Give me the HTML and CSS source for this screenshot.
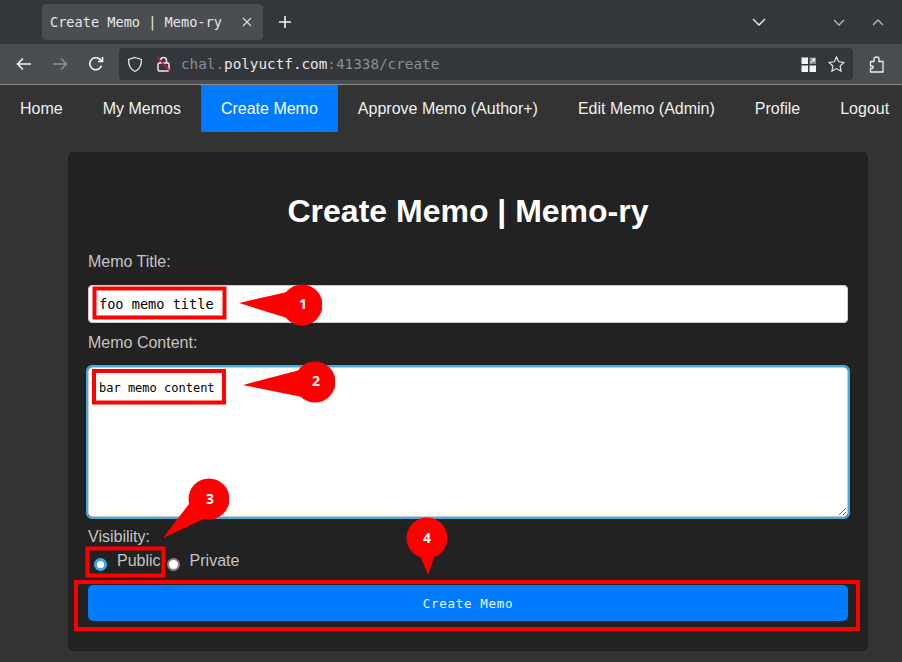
FILE: index.html
```html
<!DOCTYPE html>
<html lang="en">
<head>
<meta charset="utf-8">
<title>Create Memo | Memo-ry</title>
<link rel="stylesheet" href="styles.css">
</head>
<body>
<div class="page">
  <div class="tabbar">
    <div class="tab">
      <span class="tab-title">Create Memo | Memo-ry</span>
      <svg class="tab-close" width="10" height="10" viewBox="0 0 10 10"><path d="M1 1l8 8M9 1l-8 8"/></svg>
    </div>
    <svg class="new-tab" width="14" height="14" viewBox="0 0 14 14"><path d="M7 1v12M1 7h12"/></svg>
    <div class="spacer"></div>
    <svg class="chev tabs-list" width="14" height="8" viewBox="0 0 14 8"><path d="M1 1l6 6 6-6"/></svg>
    <svg class="chev win-min" width="12" height="7" viewBox="0 0 12 7"><path d="M1 1l5 5 5-5"/></svg>
    <svg class="chev win-max" width="12" height="7" viewBox="0 0 12 7"><path d="M1 6l5-5 5 5"/></svg>
  </div>
  <div class="toolbar">
    <svg class="tool back" width="16" height="14" viewBox="0 0 16 14"><path d="M15 7H2M7 1.500L1.500 7 7 12.500"/></svg>
    <svg class="tool fwd" width="16" height="14" viewBox="0 0 16 14"><path d="M1 7h13M9 1.500L14.500 7 9 12.500"/></svg>
    <svg class="tool reload" width="16" height="16" viewBox="0 0 16 16"><path d="M13.500 9.500A6 6 0 1 1 11.500 3L14 5M14.500 1v4.500H10"/></svg>
    <div class="urlbar">
      <svg class="shield" width="16" height="17" viewBox="0 0 16 17"><path d="M8 1.500L14.500 3.500C14.500 9 12.500 13.500 8 15.500 3.500 13.500 1.500 9 1.500 3.500Z"/></svg>
      <svg class="lock" width="15" height="16" viewBox="0 0 15 16"><rect x="2" y="7" width="11" height="8" rx="1.500" class="lock-body"/><path d="M4.500 7V4.500a3 3 0 0 1 6 0V7" class="lock-body"/><path d="M1 1l13 14" class="lock-slash"/></svg>
      <span class="url"><span class="dim">chal.</span>polyuctf.com<span class="dim">:41338/create</span></span>
      <div class="spacer"></div>
      <svg class="qr" width="15" height="15" viewBox="0 0 15 15"><rect x="0.500" y="0.500" width="6.500" height="6.500" class="qr-cell"/><rect x="0.500" y="8.500" width="6.500" height="6.500" class="qr-cell"/><rect x="8.500" y="8.500" width="6.500" height="6.500" class="qr-cell"/><rect x="8.500" y="0.500" width="6.500" height="6.500" class="qr-gray"/><path d="M9.500 6l4-4M10.500 1.800h3v3" class="qr-arrow"/></svg>
      <svg class="star" width="17" height="16" viewBox="0 0 17 16"><path d="M8.500 1l2.200 4.800 5.300.6-3.900 3.600 1 5.200-4.600-2.600-4.600 2.600 1-5.200L1 6.400l5.300-.6Z"/></svg>
    </div>
    <svg class="puzzle" width="15" height="17" viewBox="0 0 15 17"><path d="M1.500 16V12.500H3.500Q5 11.200 3.500 10H1.500V5.500H5V3Q5 1 7.500 1 10 1 10 3V5.500H14V16Z"/></svg>
  </div>
  <nav class="nav">
    <a class="nav-item">Home</a>
    <a class="nav-item">My Memos</a>
    <a class="nav-item active">Create Memo</a>
    <a class="nav-item">Approve Memo (Author+)</a>
    <a class="nav-item">Edit Memo (Admin)</a>
    <a class="nav-item">Profile</a>
    <a class="nav-item">Logout</a>
  </nav>
  <main class="main">
    <form class="card">
      <h1 class="title">Create Memo | Memo-ry</h1>
      <label class="label">Memo Title:</label>
      <input class="input" type="text" value="foo memo title">
      <label class="label label-content">Memo Content:</label>
      <textarea class="textarea">bar memo content</textarea>
      <label class="label label-vis">Visibility:</label>
      <div class="radios">
        <input class="radio" type="radio" name="v" checked><span class="radio-text">Public</span>
        <input class="radio" type="radio" name="v"><span class="radio-text">Private</span>
      </div>
      <button class="submit" type="button">Create Memo</button>
    </form>
  </main>
  <svg class="annotations" width="902" height="662" viewBox="0 0 902 662">
    <defs>
      <clipPath id="clip1"><rect x="230" y="280" width="92" height="50"/></clipPath>
      <clipPath id="clip2"><rect x="235" y="355" width="100" height="48"/></clipPath>
      <clipPath id="clip3"><rect x="160" y="470" width="69" height="75"/></clipPath>
    </defs>
    <rect x="94.500" y="288.500" width="130" height="29" class="box"/>
    <rect x="94" y="371" width="130" height="31.500" class="box"/>
    <rect x="87.500" y="548.500" width="76" height="27" class="box"/>
    <rect x="76" y="582" width="782" height="47" class="box"/>
    <g clip-path="url(#clip1)">
      <path d="M239 303L287 292 287 318Z" class="pin"/>
      <circle cx="302" cy="305" r="20.500" class="pin"/>
    </g>
    <g clip-path="url(#clip2)">
      <path d="M243 385L300 370 302 397Z" class="pin"/>
      <circle cx="315" cy="382" r="20.500" class="pin"/>
    </g>
    <g clip-path="url(#clip3)">
      <path d="M163 538L192 500 206 518Z" class="pin"/>
      <circle cx="209" cy="499" r="20.500" class="pin"/>
    </g>
    <path d="M420 555L428 575 435 555Z" class="pin"/>
    <circle cx="427" cy="538" r="20.500" class="pin"/>
    <text x="303" y="309" class="pin-num">1</text>
    <text x="316" y="386" class="pin-num">2</text>
    <text x="210" y="504" class="pin-num">3</text>
    <text x="427" y="543" class="pin-num">4</text>
  </svg>
</div>
</body>
</html>
```
FILE: styles.css
```css
* { box-sizing: border-box; }
html, body { margin: 0; padding: 0; }
body { background: #333; font-family: "Liberation Sans", Arial, sans-serif; font-size: 16px; color: #fff; }
.page { position: relative; width: 902px; height: 662px; overflow: hidden; background: #333; }
.spacer { flex: 1; }

.tabbar { height: 44px; background: #33373b; display: flex; align-items: center; padding-left: 42px; }
.tab { width: 221px; height: 36px; background: #4a4d52; border-radius: 4px; display: flex; align-items: center; padding: 0 11px 0 8px; justify-content: space-between; }
.tab-title { font-family: "DejaVu Sans Mono", monospace; font-size: 13.6px; color: #e8e8e8; white-space: nowrap; }
.tab-close path { fill: none; stroke: #e0e0e0; stroke-width: 1.1; }
.new-tab { margin-left: 15px; }
.new-tab path { fill: none; stroke: #f2f2f2; stroke-width: 1.600; }
.chev path { fill: none; stroke-width: 1.300; }
.tabs-list { margin-right: 67px; }
.tabs-list path { stroke: #f0f0f0; }
.win-min { margin-right: 27px; }
.win-max { margin-right: 18px; }
.win-min path, .win-max path { stroke: #b9bbbd; }

.toolbar { height: 41px; background: #4a4e52; border-bottom: 1px solid #8a8c8e; display: flex; align-items: center; padding: 0 0 0 16px; }
.tool path { fill: none; stroke-width: 1.600; }
.back path, .reload path { stroke: #f4f4f4; }
.fwd { margin-left: 20px; }
.fwd path { stroke: #8d9093; }
.reload { margin-left: 20px; }
.urlbar { margin-left: 15px; width: 734px; height: 32px; background: #33363a; border-radius: 4px; display: flex; align-items: center; padding: 0 8px; }
.shield path { fill: none; stroke: #e6e6e6; stroke-width: 1.300; }
.lock { margin-left: 13px; }
.lock-body { fill: none; stroke: #ededed; stroke-width: 1.500; }
.lock-slash { fill: none; stroke: #e0103a; stroke-width: 1.400; }
.url { margin-left: 10px; font-family: "DejaVu Sans Mono", monospace; font-size: 14.3px; color: #e8e8e8; white-space: nowrap; }
.dim { color: #8b8e91; }
.qr { margin-right: 12px; }
.qr-cell { fill: #f4f4f4; }
.qr-gray { fill: #85888b; }
.qr-arrow { fill: none; stroke: #e8e8e8; stroke-width: 1.200; }
.star { margin-right: 0; }
.star path { fill: none; stroke: #e8e8e8; stroke-width: 1.200; }
.puzzle { margin-left: 16px; }
.puzzle path { fill: none; stroke: #ededed; stroke-width: 1.300; }

.nav { height: 47px; background: #333; display: flex; }
.nav-item { flex: none; padding: 14px 20px; line-height: 19px; color: #f0f0f0; white-space: nowrap; }
.nav-item.active { background: #007bff; color: #fff; }

.main { padding: 20px 34px 0 68px; }
.card { width: 800px; height: 499px; background: #222; border-radius: 5px; padding: 20px; display: flex; flex-direction: column; }
.title { margin: 21px 0 23px; font-size: 32px; line-height: 37px; text-align: center; color: #fff; font-weight: 700; }
.label { display: block; color: #c4c4c4; line-height: 18px; }
.input { display: block; width: 100%; height: 38px; margin-top: 14px; padding: 0 10px; background: #fff; border: 1px solid #ccc; border-radius: 4px; font-family: "DejaVu Sans Mono", monospace; font-size: 13.6px; color: #000; outline: none; }
.label-content { margin-top: 11px; }
.textarea { display: block; width: 100%; height: 150px; margin-top: 15px; padding: 10px; background: #fff; border: 1px solid #ccc; border-radius: 4px; font-family: "DejaVu Sans Mono", monospace; font-size: 12px; line-height: 20px; color: #000; outline: 2px solid #45a8e0; outline-offset: 0; }
.label-vis { margin-top: 11px; }
.radios { display: flex; align-items: flex-start; margin-top: 6px; height: 18px; }
.radio { appearance: none; width: 13px; height: 13px; margin: 6px 5px 0 6px; border-radius: 50%; background: #fff; border: 2px solid #85858f; flex: none; }
.radio:checked { background: #fff; border: 3.500px solid #45a8e0; }
.radio-text { color: #c4c4c4; line-height: 18px; margin-left: 5px; }
.radio-text + .radio { margin-left: 6px; margin-right: 5px; }
.submit { display: block; width: 100%; height: 36px; margin-top: 15px; background: #007bff; color: #eef4ff; border: none; border-radius: 5px; font-family: "DejaVu Sans Mono", monospace; font-size: 12.5px; letter-spacing: .7px; }

.annotations { position: absolute; left: 0; top: 0; pointer-events: none; }
.box { fill: none; stroke: #f00; stroke-width: 4; }
.pin { fill: #f00; }
.pin-num { fill: #fff; font-family: "Noto Sans", sans-serif; font-weight: 700; font-size: 14px; text-anchor: middle; }
```
